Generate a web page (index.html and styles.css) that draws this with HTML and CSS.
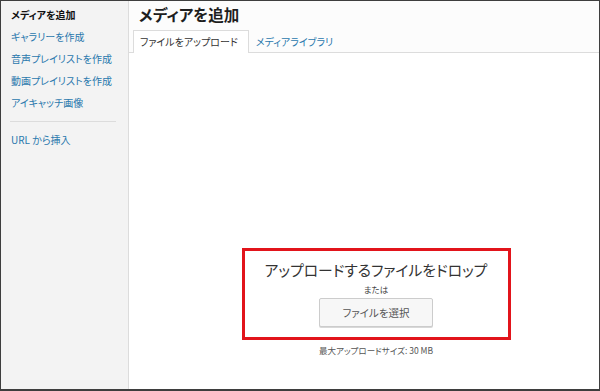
FILE: index.html
```html
<!DOCTYPE html>
<html lang="ja">
<head>
<meta charset="utf-8">
<link rel="stylesheet" href="styles.css">
</head>
<body>
<div class="frame">
  <aside class="menu">
    <div class="menu-item current">メディアを追加</div>
    <a class="menu-item">ギャラリーを作成</a>
    <a class="menu-item">音声プレイリストを作成</a>
    <a class="menu-item">動画プレイリストを作成</a>
    <a class="menu-item">アイキャッチ画像</a>
    <div class="separator"></div>
    <a class="menu-item">URL から挿入</a>
  </aside>
  <main class="content">
    <header class="head">
      <h1 class="title">メディアを追加</h1>
      <nav class="tabs">
        <span class="tab active">ファイルをアップロード</span>
        <a class="tab">メディアライブラリ</a>
      </nav>
    </header>
    <section class="uploader">
      <div class="drop">
        <div class="drop-title">アップロードするファイルをドロップ</div>
        <div class="drop-or">または</div>
        <button class="select-btn">ファイルを選択</button>
      </div>
      <div class="max-size">最大アップロードサイズ: 30 MB</div>
    </section>
  </main>
</div>
</body>
</html>
```

FILE: styles.css
```css
* { box-sizing: border-box; }
html, body { margin: 0; padding: 0; }
body {
  font-family: "Noto Sans CJK JP", "Noto Sans", sans-serif;
  font-feature-settings: "palt";
  background: #fff;
}
.frame {
  width: 600px;
  height: 391px;
  border: 1px solid #3e3e3e;
  border-bottom-width: 2px;
  display: flex;
  overflow: hidden;
}
.menu {
  width: 128px;
  flex: none;
  background: #f3f3f3;
  border-right: 1px solid #dcdcdc;
  padding-top: 3px;
}
.menu-item {
  display: block;
  padding-left: 10px;
  font-size: 10px;
  line-height: 22px;
  color: #2a78ad;
  white-space: nowrap;
}
.menu-item.current {
  color: #111;
  font-weight: bold;
}
.separator {
  height: 1px;
  background: #dcdcdc;
  margin: 7px 12px 7px 9px;
}
.content {
  flex: 1;
  display: flex;
  flex-direction: column;
  background: #fff;
}
.head {
  background: #fcfcfc;
  border-bottom: 1px solid #dcdcdc;
  height: 52px;
  flex: none;
}
.title {
  margin: 0;
  padding-left: 10px;
  font-size: 15.5px;
  line-height: 26px;
  font-weight: bold;
  color: #1e1e1e;
}
.tabs {
  display: flex;
  margin-top: 3px;
  padding-left: 4px;
}
.tab {
  display: block;
  height: 23px;
  padding: 0 10px 0 6px;
  font-size: 10px;
  line-height: 22px;
  color: #2a78ad;
  border: 1px solid transparent;
  border-bottom: none;
  white-space: nowrap;
}
.tab.active {
  color: #333;
  background: #fff;
  border-color: #dcdcdc;
}
.uploader {
  flex: 1;
  display: flex;
  flex-direction: column;
  align-items: center;
  padding-left: 24px;
  padding-top: 195px;
}
.drop {
  width: 269px;
  height: 92px;
  border: 3px solid #e2141b;
  display: flex;
  flex-direction: column;
  align-items: center;
  padding-top: 9px;
}
.drop-title {
  font-size: 14.8px;
  line-height: 20px;
  color: #333;
}
.drop-or {
  margin-top: 3px;
  font-size: 8.5px;
  line-height: 12px;
  color: #444;
}
.select-btn {
  margin-top: 3px;
  width: 114px;
  height: 29px;
  background: #f7f7f7;
  border: 1px solid #cccccc;
  border-radius: 2px;
  box-shadow: 0 1px 0 #d8d8d8;
  font-family: inherit;
  font-feature-settings: "palt";
  font-size: 10.5px;
  color: #555;
  padding: 0;
}
.max-size {
  margin-top: 3px;
  font-size: 8.5px;
  line-height: 14px;
  color: #555;
}
```
